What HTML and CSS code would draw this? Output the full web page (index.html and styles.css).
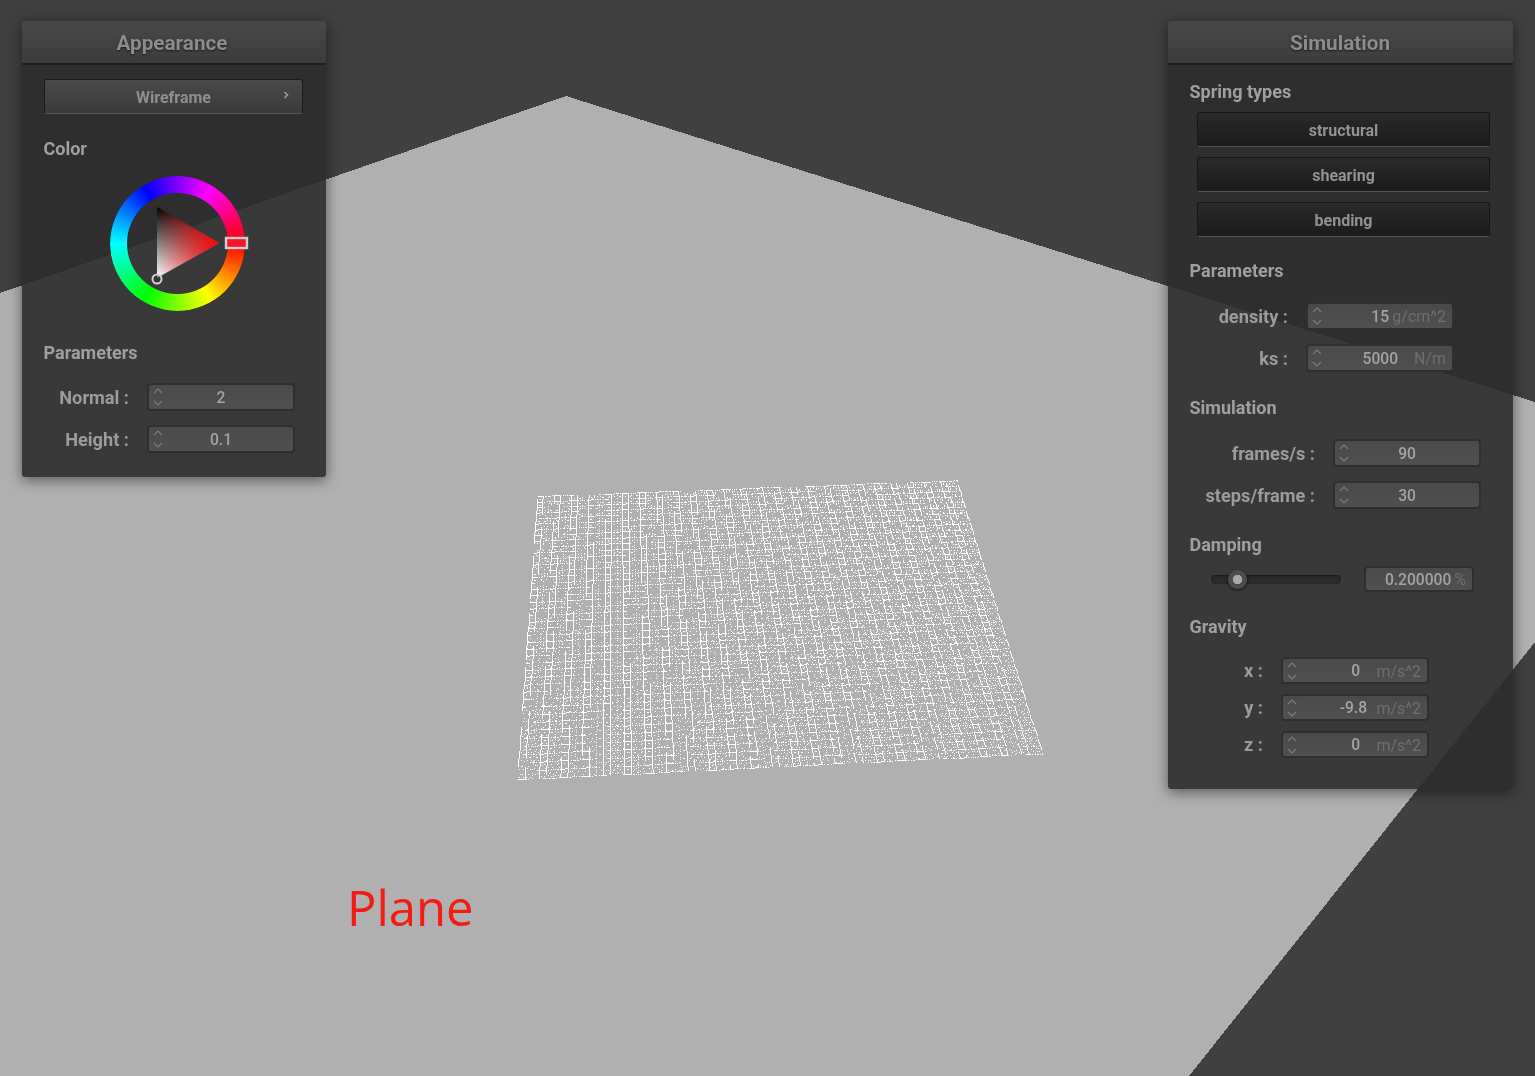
FILE: index.html
```html
<!DOCTYPE html>
<html lang="en">
<head>
<meta charset="utf-8">
<title>Cloth simulation</title>
<link rel="stylesheet" href="styles.css">
</head>
<body>
<main class="stage">
  <svg class="floor" width="1535" height="1076" viewBox="0 0 1535 1076" shape-rendering="crispEdges"><polygon points="566,96 1535,402 1535,642 1189,1076 0,1076 0,293" fill="#b0b0b0"/></svg>
  <canvas id="mesh" class="mesh" width="540" height="310"></canvas>
  <div class="plane-label">Plane</div>

  <section class="panel panel-appearance">
    <header class="panel-title">Appearance</header>
    <div class="panel-body">
      <button class="popup">Wireframe<svg class="popup-arrow" width="8" height="10" viewBox="0 0 8 10"><path d="M2.5 2 L5.5 5 L2.5 8" fill="none" stroke="#a0a0a0" stroke-width="1.5"/></svg></button>
      <h2 class="label label-color">Color</h2>
      <div class="wheel">
        <div class="wheel-ring"></div>
        <svg class="wheel-marks" width="140" height="140" viewBox="109 174 140 140">
          <defs>
            <linearGradient id="tone" x1="0" y1="207" x2="0" y2="277" gradientUnits="userSpaceOnUse"><stop offset="0" stop-color="#000"/><stop offset="1" stop-color="#fff"/></linearGradient>
            <linearGradient id="hue" x1="157" y1="0" x2="219" y2="0" gradientUnits="userSpaceOnUse"><stop offset="0" stop-color="#f00" stop-opacity="0"/><stop offset="1" stop-color="#f00"/></linearGradient>
          </defs>
          <polygon points="157,207 219,243 157,278" fill="url(#tone)"/>
          <polygon points="157,207 219,243 157,278" fill="url(#hue)"/>
          <rect x="226" y="238" width="21" height="10" fill="#f5142a" stroke="#d0d0d0" stroke-width="2.4"/>
          <circle cx="157" cy="279" r="4.5" fill="#333" fill-opacity=".6" stroke="#d0d0d0" stroke-width="2"/>
        </svg>
      </div>
      <h2 class="label label-params">Parameters</h2>
      <div class="fields fields-appearance">
        <div class="field"><span class="field-name">Normal :</span><span class="input spin"><svg class="chev" width="10" height="18" viewBox="0 0 10 18"><path d="M1 5 L5 1 L9 5 M1 13 L5 17 L9 13" fill="none" stroke="#7d7d7d" stroke-width="1.1"/></svg><span class="val val-center">2</span></span></div>
        <div class="field"><span class="field-name">Height :</span><span class="input spin"><svg class="chev" width="10" height="18" viewBox="0 0 10 18"><path d="M1 5 L5 1 L9 5 M1 13 L5 17 L9 13" fill="none" stroke="#7d7d7d" stroke-width="1.1"/></svg><span class="val val-center">0.1</span></span></div>
      </div>
    </div>
  </section>

  <section class="panel panel-simulation">
    <header class="panel-title">Simulation</header>
    <div class="panel-body">
      <h2 class="label label-first">Spring types</h2>
      <div class="toggles">
        <button class="toggle">structural</button>
        <button class="toggle">shearing</button>
        <button class="toggle">bending</button>
      </div>
      <h2 class="label label-sim-params">Parameters</h2>
      <div class="fields fields-density">
        <div class="field"><span class="field-name">density :</span><span class="input spin"><svg class="chev" width="10" height="18" viewBox="0 0 10 18"><path d="M1 5 L5 1 L9 5 M1 13 L5 17 L9 13" fill="none" stroke="#7d7d7d" stroke-width="1.1"/></svg><span class="val val-right">15</span><span class="unit">g/cm^2</span></span></div>
        <div class="field"><span class="field-name">ks :</span><span class="input spin"><svg class="chev" width="10" height="18" viewBox="0 0 10 18"><path d="M1 5 L5 1 L9 5 M1 13 L5 17 L9 13" fill="none" stroke="#7d7d7d" stroke-width="1.1"/></svg><span class="val val-right">5000</span><span class="unit unit-n">N/m</span></span></div>
      </div>
      <h2 class="label label-sim">Simulation</h2>
      <div class="fields fields-frames">
        <div class="field"><span class="field-name">frames/s :</span><span class="input spin"><svg class="chev" width="10" height="18" viewBox="0 0 10 18"><path d="M1 5 L5 1 L9 5 M1 13 L5 17 L9 13" fill="none" stroke="#7d7d7d" stroke-width="1.1"/></svg><span class="val val-center">90</span></span></div>
        <div class="field"><span class="field-name">steps/frame :</span><span class="input spin"><svg class="chev" width="10" height="18" viewBox="0 0 10 18"><path d="M1 5 L5 1 L9 5 M1 13 L5 17 L9 13" fill="none" stroke="#7d7d7d" stroke-width="1.1"/></svg><span class="val val-center">30</span></span></div>
      </div>
      <h2 class="label label-damping">Damping</h2>
      <div class="damping">
        <div class="slider"><span class="knob"></span></div>
        <span class="input readout"><span class="val val-right">0.200000</span><span class="unit unit-pct">%</span></span>
      </div>
      <h2 class="label label-gravity">Gravity</h2>
      <div class="fields fields-gravity">
        <div class="field"><span class="field-name">x :</span><span class="input spin"><svg class="chev" width="10" height="18" viewBox="0 0 10 18"><path d="M1 5 L5 1 L9 5 M1 13 L5 17 L9 13" fill="none" stroke="#7d7d7d" stroke-width="1.1"/></svg><span class="val val-right val-gravity">0</span><span class="unit unit-g">m/s^2</span></span></div>
        <div class="field"><span class="field-name">y :</span><span class="input spin"><svg class="chev" width="10" height="18" viewBox="0 0 10 18"><path d="M1 5 L5 1 L9 5 M1 13 L5 17 L9 13" fill="none" stroke="#7d7d7d" stroke-width="1.1"/></svg><span class="val val-right">-9.8</span><span class="unit unit-g">m/s^2</span></span></div>
        <div class="field"><span class="field-name">z :</span><span class="input spin"><svg class="chev" width="10" height="18" viewBox="0 0 10 18"><path d="M1 5 L5 1 L9 5 M1 13 L5 17 L9 13" fill="none" stroke="#7d7d7d" stroke-width="1.1"/></svg><span class="val val-right val-gravity">0</span><span class="unit unit-g">m/s^2</span></span></div>
      </div>
    </div>
  </section>
</main>
<script src="script.js"></script>
</body>
</html>
```
FILE: styles.css
```css
* { box-sizing: border-box; }
html, body { margin: 0; padding: 0; }
body { background: #404040; font-family: Roboto, "Liberation Sans", sans-serif; overflow: hidden; }
.stage { position: relative; width: 1535px; height: 1076px; overflow: hidden; }
.floor { position: absolute; left: 0; top: 0; }
.mesh { position: absolute; left: 510px; top: 475px; }
.plane-label { position: absolute; left: 347px; top: 873px; font: 400 49px/68px "Open Sans", sans-serif; color: #f21c14; }

.panel { position: absolute; top: 21px; background: rgba(44,44,44,.9); border-radius: 3px; box-shadow: 0 3px 14px rgba(0,0,0,.5); color: #9c9c9c; }
.panel-appearance { left: 22px; width: 304px; height: 456px; }
.panel-simulation { left: 1168px; width: 345px; height: 768px; }
.panel-title { height: 44px; background: linear-gradient(#484848, #3c3c3c); border-bottom: 2px solid #1f1f1f; border-radius: 3px 3px 0 0; font-size: 20.7px; font-weight: 700; line-height: 45px; text-align: center; color: #8c8c8c; text-shadow: 0 1px 2px rgba(0,0,0,.6); filter: blur(.45px); }
.panel-appearance .panel-title { padding-right: 4px; }
.panel-simulation .panel-title { padding-right: 1px; }
.panel-body { padding: 0 22px; filter: blur(.45px); }

.label { margin: 0; margin-left: -.5px; font-size: 18px; font-weight: 700; line-height: 22px; color: #a0a0a0; }
.label-color { margin-top: 24px; }
.label-params { margin-top: 28px; }
.label-first { margin-top: 16px; }
.label-sim-params { margin-top: 23px; }
.label-sim { margin-top: 25px; }
.label-damping { margin-top: 25px; }
.label-gravity { margin-top: 24px; }

.popup { position: relative; display: block; width: 259px; height: 35px; margin: 14px 0 0; padding: 0; background: linear-gradient(#494949, #3b3b3b); border: 1px solid #1c1c1c; border-bottom-color: #555; border-radius: 3px; font: 700 16px/35px Roboto, sans-serif; color: #8e8e8e; text-align: center; }
.popup-arrow { position: absolute; right: 12px; top: 10px; }

.wheel { position: relative; width: 140px; height: 140px; margin: 14px 0 0 65px; }
.wheel-ring { position: absolute; left: 1px; top: 2px; width: 135px; height: 135px; border-radius: 50%; background: conic-gradient(from 90deg, #f00, #ff0, #0f0, #0ff, #00f, #f0f, #f00); -webkit-mask: radial-gradient(circle, transparent 50px, #000 51px); mask: radial-gradient(circle, transparent 50px, #000 51px); }
.wheel-marks { position: absolute; left: 0; top: 0; }

.fields { display: flex; flex-direction: column; }
.field { display: flex; align-items: center; justify-content: flex-end; }
.field-name { margin-right: 18px; font-size: 18.2px; font-weight: 700; color: #9c9c9c; white-space: nowrap; }
.fields-appearance { gap: 14px; margin: 19px 9px 0 0; }
.fields-density { gap: 14px; margin: 20px 37px 0 0; }
.fields-frames { gap: 14px; margin: 20px 10px 0 0; }
.fields-gravity { gap: 10px; margin: 19px 62px 0 0; }
.fields-gravity .input { height: 27px; }

.input { display: flex; align-items: center; height: 28px; padding-top: 1px; background: linear-gradient(#4a4a4a, #505050); border: 2px solid rgba(34,34,34,.68); border-radius: 4px; font-size: 15.6px; font-weight: 500; color: #a3a3a3; }
.spin { position: relative; width: 148px; }
.chev { position: absolute; left: 4px; top: 3px; }
.val-center { flex: 1; text-align: center; }
.val-right { flex: 1; text-align: right; }
.val-gravity { padding-right: 7px; }
.unit { flex: none; width: 63px; padding-right: 6px; color: #6f6f6f; font-size: 16px; font-weight: 400; text-align: right; white-space: nowrap; }
.unit-n { width: 54px; }
.unit-g { width: 60px; }
.unit-pct { width: auto; padding: 0 6px 0 3px; }

.toggles { display: flex; flex-direction: column; gap: 10px; margin: 9px 0 0 7px; width: 293px; }
.toggle { height: 35px; padding: 2px 0 0; background: linear-gradient(#2a2a2a, #1b1b1b); border: 1px solid #161616; border-bottom-color: #555; border-radius: 3px; font: 700 16px/31px Roboto, sans-serif; color: #929292; text-align: center; }

.damping { display: flex; align-items: center; justify-content: space-between; height: 26px; margin: 10px 17px 0 21px; }
.slider { position: relative; width: 130px; height: 9px; background: #2a2a2a; border-radius: 4px; box-shadow: inset 0 1px 2px rgba(0,0,0,.4); }
.knob { position: absolute; left: 17px; top: -5px; width: 19px; height: 19px; border-radius: 50%; background: radial-gradient(circle, #a8a8a8 0 4.5px, #4d4d4d 5px 100%); box-shadow: 0 1px 3px rgba(0,0,0,.7); }
.readout { width: 110px; height: 26px; }
```
FILE: script.js
```js
(function () {
  var canvas = document.getElementById('mesh');
  var ctx = canvas.getContext('2d');
  var ox = 510, oy = 475, w = canvas.width, h = canvas.height, s = 1.25;
  var sw = Math.ceil(w * s) + 2, sh = Math.ceil(h * s) + 2;
  var buf = new Uint8Array(sw * sh);

  // corners of the cloth on screen: top-left, top-right, bottom-right, bottom-left
  var q = [[537, 496], [956, 480], [1042, 753], [517, 779]];
  var dx1 = q[1][0] - q[2][0], dx2 = q[3][0] - q[2][0], sx = q[0][0] - q[1][0] + q[2][0] - q[3][0];
  var dy1 = q[1][1] - q[2][1], dy2 = q[3][1] - q[2][1], sy = q[0][1] - q[1][1] + q[2][1] - q[3][1];
  var den = dx1 * dy2 - dx2 * dy1;
  var g = (sx * dy2 - dx2 * sy) / den, k = (dx1 * sy - sx * dy1) / den;
  var a = q[1][0] - q[0][0] + g * q[1][0], b = q[3][0] - q[0][0] + k * q[3][0], c = q[0][0];
  var d = q[1][1] - q[0][1] + g * q[1][1], e = q[3][1] - q[0][1] + k * q[3][1], f = q[0][1];

  function project(u, v) {
    var t = g * u + k * v + 1;
    return [((a * u + b * v + c) / t - ox) * s, ((d * u + e * v + f) / t - oy) * s];
  }
  // step > 1 keeps only every step-th pixel, which is how the fine wires show up
  function line(p, r, step) {
    var x0 = Math.round(p[0]), y0 = Math.round(p[1]), x1 = Math.round(r[0]), y1 = Math.round(r[1]);
    var ax = Math.abs(x1 - x0), ay = Math.abs(y1 - y0), stx = x0 < x1 ? 1 : -1, sty = y0 < y1 ? 1 : -1, err = ax - ay, n = 0;
    for (;;) {
      if (n % step === 0 && x0 >= 0 && y0 >= 0 && x0 < sw && y0 < sh) buf[y0 * sw + x0] = 1;
      n++;
      if (x0 === x1 && y0 === y1) break;
      var e2 = 2 * err;
      if (e2 > -ay) { err -= ay; x0 += stx; }
      if (e2 < ax) { err += ax; y0 += sty; }
    }
  }

  // the moire of the wires reads as ladders: pairs of solid rails with rungs,
  // and broken wires plus dots in the gaps between the ladders
  var N = 75, M = 42, i, j;
  for (j = 0; j <= M; j++) {
    for (i = 0; i <= N; i++) {
      var p = project(i / N, j / M);
      var inLadder = i % 3 === 0;
      if (i < N) line(p, project((i + 1) / N, j / M), inLadder ? 1 : 2);
      if (j < M) line(p, project(i / N, (j + 1) / M), i % 3 === 2 ? 3 : 1);
      if (i < N && j < M) {
        line(p, project((i + 1) / N, (j + 1) / M), 4);
        line(project((i + 1) / N, j / M), project(i / N, (j + 1) / M), 4);
      }
    }
  }

  var img = ctx.createImageData(w, h);
  for (var y = 0; y < h; y++) {
    for (var x = 0; x < w; x++) {
      if (buf[Math.floor(y * s) * sw + Math.floor(x * s)]) {
        var o = (y * w + x) * 4;
        img.data[o] = img.data[o + 1] = img.data[o + 2] = img.data[o + 3] = 255;
      }
    }
  }
  ctx.putImageData(img, 0, 0);
})();
```
